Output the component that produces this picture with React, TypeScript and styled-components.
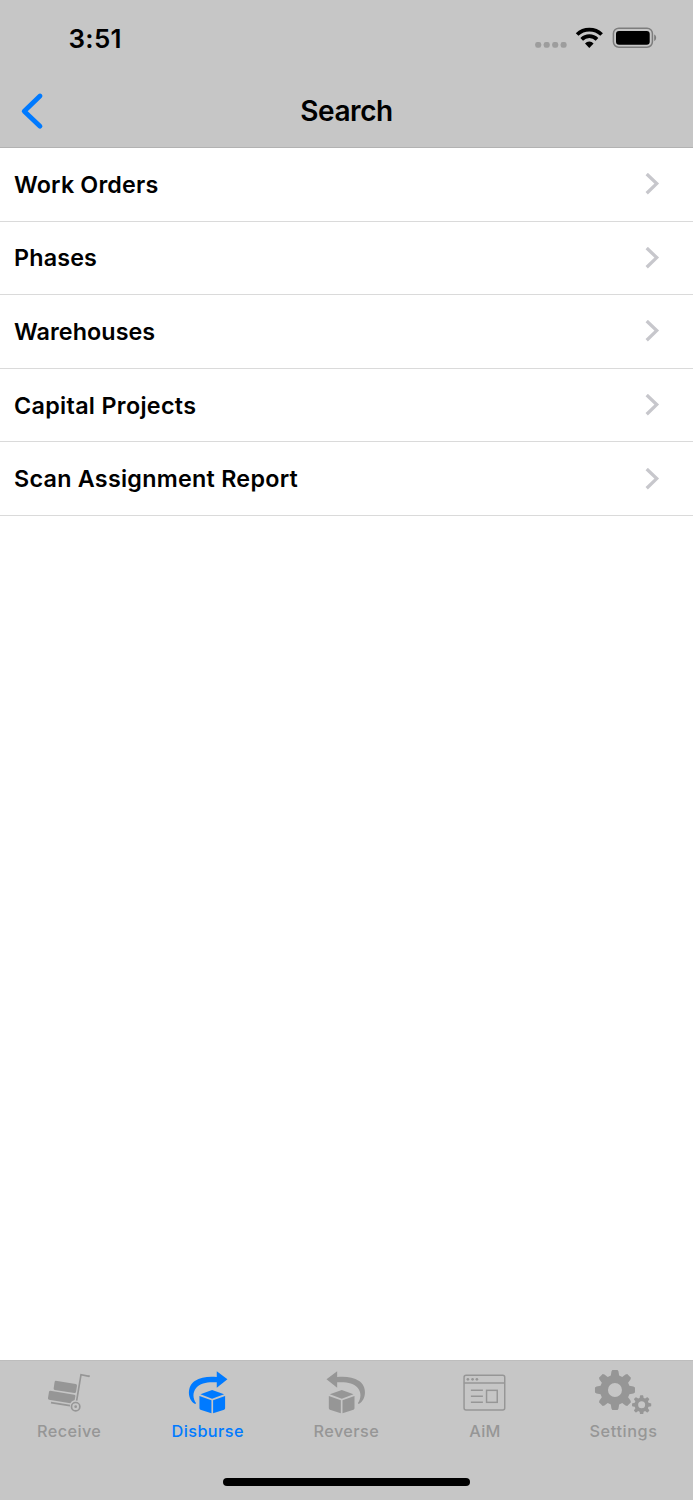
import React from 'react';
import styled, { createGlobalStyle } from 'styled-components';

const GlobalStyle = createGlobalStyle`
  * { box-sizing: border-box; }
  html, body { margin: 0; padding: 0; background: #fff; }
  svg { display: block; }
`;

const Screen = styled.div`
  display: flex;
  flex-direction: column;
  width: 693px;
  height: 1500px;
  background: #fff;
  color: #000;
  font-family: Inter, 'Liberation Sans', sans-serif;
  overflow: hidden;
`;

const Header = styled.header`
  flex: none;
  height: 148px;
  background: #c6c6c6;
  border-bottom: 1px solid #b2b2b2;
`;

const StatusBar = styled.div`
  display: flex;
  align-items: center;
  justify-content: space-between;
  height: 76px;
  padding: 0 36px 0 68.5px;
`;

const Clock = styled.span`
  padding-top: 1px;
  font-size: 26px;
  font-weight: 600;
  line-height: 32px;
  letter-spacing: 0.3px;
`;

const NavBar = styled.div`
  display: grid;
  grid-template-columns: 60px 1fr 60px;
  align-items: center;
  height: 70px;
`;

const BackButton = styled.button`
  padding: 0 0 0 20px;
  border: 0;
  background: none;
`;

const Title = styled.h1`
  margin: 0;
  text-align: center;
  font-size: 28px;
  font-weight: 600;
  line-height: 36px;
  letter-spacing: -0.4px;
`;

const List = styled.ul`
  flex: 1;
  margin: 0;
  padding: 0;
  list-style: none;
`;

const Row = styled.li`
  display: flex;
  align-items: center;
  justify-content: space-between;
  height: 73.6px;
  padding: 0 33px 0 14px;
  border-bottom: 1px solid #dadada;
`;

const RowLabel = styled.span<{ $spacing: number }>`
  padding-top: 1px;
  font-size: 23.3px;
  font-weight: 600;
  line-height: 30px;
  letter-spacing: ${(p) => p.$spacing}px;
`;

const Footer = styled.footer`
  flex: none;
  height: 140px;
  background: #c6c6c6;
  border-top: 1px solid #bdbdbd;
`;

const Tabs = styled.nav`
  display: grid;
  grid-template-columns: repeat(5, 1fr);
  height: 117px;
`;

const Tab = styled.a<{ $active?: boolean }>`
  display: flex;
  flex-direction: column;
  align-items: center;
  padding-top: 5px;
  color: ${(p) => (p.$active ? '#007aff' : '#969696')};
`;

const TabLabel = styled.span<{ $spacing: number }>`
  margin-top: 7px;
  margin-right: 0.3px;
  font-size: 16.3px;
  font-weight: 500;
  line-height: 20px;
  letter-spacing: ${(p) => p.$spacing}px;
`;

const HomeIndicator = styled.div`
  width: 247.5px;
  height: 8px;
  margin: 0 auto 0 222.5px;
  border-radius: 4px;
  background: #000;
`;

const StatusIcons = () => (
  <svg width="122" height="26" viewBox="0 0 122 26">
    <g fill="#9d9d9d">
      {[0, 8.5, 17, 25.4].map((x) => (
        <rect key={x} x={x + 0.2} y="17" width="6" height="5.8" rx="2.2" />
      ))}
    </g>
    <g fill="none" stroke="#000" strokeWidth="3.8">
      <path d="M42.1 9.5a17.6 17.6 0 0 1 24.5 0" />
      <path d="M46.7 14.3a11 11 0 0 1 15.3 0" />
    </g>
    <path d="M54.3 22.900l-4.300-4.500a6 6 0 0 1 8.600 0z" />
    <rect x="78.4" y="3.2" width="39" height="19" rx="5.4" fill="none" stroke="#7d7d7d" strokeWidth="1.5" />
    <rect x="81" y="5.9" width="33.7" height="13.8" rx="3" />
    <path d="M119.2 9.4c2.6 1 2.6 5.6 0 6.6z" fill="#7d7d7d" />
  </svg>
);

const BackIcon = () => (
  <svg width="24" height="38" viewBox="0 0 24 38" fill="none" stroke="#007aff" strokeWidth="4.8" strokeLinecap="round" strokeLinejoin="round">
    <path d="M20 4L4.200 19.200 20 34.200" />
  </svg>
);

const Chevron = () => (
  <svg width="15" height="22" viewBox="0 0 15 22" fill="none" stroke="#c7c7cc" strokeWidth="3.3">
    <path d="M1.7 1L11.700 10.600 1.7 20.200" />
  </svg>
);

const TabIcon = styled.svg.attrs({ width: 60, height: 48 })`
  fill: currentColor;
`;

const ReceiveIcon = () => (
  <TabIcon viewBox="58 33 180 144">
    <path d="M108 77L168 87Q172 88 172 92L169 111Q168 115 164 114L105 105Q101 104 102 100L105 80Q106 77 108 77Z" />
    <path d="M92 107L164 119Q168 120 167 124L165 135Q155 137 152 145L88 134Q84 133 85 129L88 110Q89 107 92 107Z" />
    <g fill="none" stroke="currentColor">
      <path d="M209 64L184 59 171 137" strokeWidth="5" />
      <path d="M208 60.500L208.500 66" strokeWidth="3" />
      <path d="M94 143L151 152" strokeWidth="5" />
      <circle cx="168" cy="155" r="12.500" strokeWidth="5" />
    </g>
    <circle cx="168" cy="155" r="4" />
  </TabIcon>
);

const boxAndArrow = (
  <>
    <path d="M105 147C80 133 81 93 104 78C122 66 145 64 170 66V49L202 73 170 98V82C145 80 121 83 108 99C97 113 98 130 108 145Z" />
    <path d="M121 118L156 105 192 118 156 131Z" />
    <path d="M118 123L154 136V175L121 164Q118 163 118 160Z" />
    <path d="M159 136L195 123V160Q195 163 192 164L159 175Z" />
  </>
);

const DisburseIcon = () => <TabIcon viewBox="53.700 33 180 144">{boxAndArrow}</TabIcon>;

const ReverseIcon = () => (
  <TabIcon viewBox="64.500 33 180 144">
    <g transform="translate(298 0) scale(-1 1)">{boxAndArrow}</g>
  </TabIcon>
);

const AimIcon = () => (
  <TabIcon viewBox="75.300 33 180 144">
    <g fill="none" stroke="currentColor" strokeWidth="4.400">
      <rect x="102.500" y="61" width="122" height="104" rx="6" />
      <path d="M102 84H225M123 106H159M123 124H159M123 142H159" />
      <rect x="170" y="106" width="32" height="36" />
    </g>
    <circle cx="114" cy="73" r="4" />
    <circle cx="128" cy="73" r="4" />
    <circle cx="141" cy="73" r="4" />
  </TabIcon>
);

function gearPath(cx: number, cy: number, outer: number, root: number, hole: number) {
  const points: string[] = [];
  const corners: [number, number][] = [
    [root, -0.28],
    [outer * 0.93, -0.19],
    [outer, -0.13],
    [outer, 0.13],
    [outer * 0.93, 0.19],
    [root, 0.28],
  ];
  for (let i = 0; i < 8; i++) {
    const base = (i * Math.PI) / 4;
    corners.forEach(([r, a]) => {
      points.push(`${(cx + r * Math.sin(base + a)).toFixed(2)} ${(cy - r * Math.cos(base + a)).toFixed(2)}`);
    });
  }
  return `M${points.join('L')}ZM${cx - hole} ${cy}a${hole} ${hole} 0 1 0 ${hole * 2} 0a${hole} ${hole} 0 1 0 ${-hole * 2} 0Z`;
}

const SettingsIcon = () => (
  <TabIcon viewBox="71.100 33 180 144" fillRule="evenodd">
    <path d={gearPath(134, 105, 60.5, 45, 21)} />
    <path d={gearPath(214, 149.5, 29, 21.5, 10.5)} />
  </TabIcon>
);

const rows = [
  { label: 'Work Orders', spacing: 0.17 },
  { label: 'Phases', spacing: 0.17 },
  { label: 'Warehouses', spacing: 0.08 },
  { label: 'Capital Projects', spacing: 0.33 },
  { label: 'Scan Assignment Report', spacing: 0.27 },
];

const tabs = [
  { label: 'Receive', Icon: ReceiveIcon, spacing: 0.4 },
  { label: 'Disburse', Icon: DisburseIcon, spacing: 0.4, active: true },
  { label: 'Reverse', Icon: ReverseIcon, spacing: 0.4 },
  { label: 'AiM', Icon: AimIcon, spacing: 0.2 },
  { label: 'Settings', Icon: SettingsIcon, spacing: 0.6 },
];

export default function App() {
  return (
    <>
      <GlobalStyle />
      <Screen>
        <Header>
          <StatusBar>
            <Clock>3:51</Clock>
            <StatusIcons />
          </StatusBar>
          <NavBar>
            <BackButton aria-label="Back">
              <BackIcon />
            </BackButton>
            <Title>Search</Title>
          </NavBar>
        </Header>
        <List>
          {rows.map(({ label, spacing }) => (
            <Row key={label}>
              <RowLabel $spacing={spacing}>{label}</RowLabel>
              <Chevron />
            </Row>
          ))}
        </List>
        <Footer>
          <Tabs>
            {tabs.map(({ label, Icon, spacing, active }) => (
              <Tab key={label} $active={active}>
                <Icon />
                <TabLabel $spacing={spacing}>{label}</TabLabel>
              </Tab>
            ))}
          </Tabs>
          <HomeIndicator />
        </Footer>
      </Screen>
    </>
  );
}
